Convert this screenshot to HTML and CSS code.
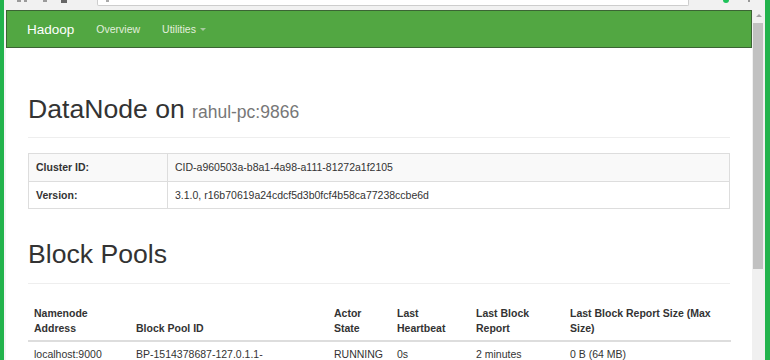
FILE: index.html
```html
<!DOCTYPE html>
<html>
<head>
<meta charset="utf-8">
<title>DataNode Information</title>
<link rel="stylesheet" href="styles.css">
</head>
<body>
<div class="frame">
  <div class="chrome">
    <div class="chrome-icons">
      <span class="ci ci-a"></span>
      <span class="ci ci-b"></span>
      <span class="ci ci-c"></span>
      <span class="ci ci-d"></span>
    </div>
    <div class="address"><span class="addr-mark"></span></div>
    <div class="chrome-right">
      <span class="ext-dot"></span>
      <span class="ext-menu"></span>
    </div>
  </div>
  <div class="viewport">
    <div class="page">
      <nav class="navbar">
        <span class="brand">Hadoop</span>
        <span class="nav-link">Overview</span>
        <span class="nav-link">Utilities <span class="caret"></span></span>
      </nav>
      <div class="container">
        <div class="page-header first">
          <h1>DataNode on <small>rahul-pc:9866</small></h1>
        </div>
        <table class="info">
          <tr class="striped"><th>Cluster ID:</th><td>CID-a960503a-b8a1-4a98-a111-81272a1f2105</td></tr>
          <tr><th>Version:</th><td>3.1.0, r16b70619a24cdcf5d3b0fcf4b58ca77238ccbe6d</td></tr>
        </table>
        <div class="page-header second">
          <h1>Block Pools</h1>
        </div>
        <table class="pools">
          <colgroup>
            <col class="c1"><col class="c2"><col class="c3"><col class="c4"><col class="c5"><col class="c6">
          </colgroup>
          <thead>
            <tr>
              <th>Namenode Address</th>
              <th>Block Pool ID</th>
              <th>Actor State</th>
              <th>Last Heartbeat</th>
              <th>Last Block Report</th>
              <th>Last Block Report Size (Max Size)</th>
            </tr>
          </thead>
          <tbody>
            <tr>
              <td>localhost:9000</td>
              <td>BP-1514378687-127.0.1.1-<wbr>1523431406012</td>
              <td>RUNNING</td>
              <td>0s</td>
              <td>2 minutes</td>
              <td>0 B (64 MB)</td>
            </tr>
          </tbody>
        </table>
      </div>
    </div>
    <div class="scrollbar">
      <span class="arrow-up"></span>
      <span class="thumb"></span>
    </div>
  </div>
</div>
</body>
</html>
```
FILE: styles.css
```css
* { box-sizing: border-box; }
html, body { margin: 0; padding: 0; }
body {
  width: 770px;
  height: 360px;
  overflow: hidden;
  background: #fff;
  font-family: "Liberation Sans", Arial, sans-serif;
  font-size: 10.5px;
  color: #333;
}
.frame {
  display: flex;
  flex-direction: column;
  width: 770px;
  height: 360px;
  border-left: 4px solid #22b34c;
  border-right: 5px solid #22b34c;
}
.chrome {
  height: 10px;
  flex: none;
  display: flex;
  background: #f1f1f1;
}
.chrome-icons {
  width: 93px;
  display: flex;
  align-items: flex-start;
}
.ci { display: block; height: 2px; background: #9a9a9a; }
.ci-a { width: 4px; margin-left: 13px; }
.ci-b { width: 3px; margin-left: 3px; }
.ci-c { width: 4px; margin-left: 16px; }
.ci-d { width: 6px; height: 3px; margin-left: 14px; background: #666; }
.address {
  width: 592px;
  height: 6px;
  background: #fff;
  border: 1px solid #cdcdcd;
  border-top: none;
  border-radius: 0 0 2px 2px;
  position: relative;
}
.addr-mark {
  position: absolute;
  left: 8px;
  top: 0;
  width: 3px;
  height: 2px;
  background: #aaa;
}
.chrome-right {
  flex: 1;
  display: flex;
  align-items: flex-start;
}
.ext-dot {
  width: 6px;
  height: 3px;
  margin-left: 34px;
  background: #1ec25a;
  border-radius: 0 0 3px 3px;
}
.ext-menu {
  width: 2px;
  height: 2px;
  margin-left: 19px;
  background: #999;
}
.viewport {
  flex: 1;
  display: flex;
  border-left: 2px solid #f4f4f4;
  min-height: 0;
}
.page {
  flex: 1;
  overflow: hidden;
  background: #fff;
}
.navbar {
  height: 38px;
  background: #52a742;
  border: 1px solid #3b6434;
  display: flex;
  align-items: center;
  padding-left: 20px;
}
.brand {
  font-size: 13.5px;
  color: #fff;
  padding: 0 11px 0 0;
}
.nav-link {
  font-size: 10.5px;
  color: #e2efde;
  padding: 0 11px;
  display: flex;
  align-items: center;
}
.caret {
  display: inline-block;
  width: 0;
  height: 0;
  margin-left: 4px;
  border-top: 3px solid #a8c9a0;
  border-left: 3px solid transparent;
  border-right: 3px solid transparent;
}
.container {
  margin: 0 22px;
}
.page-header {
  border-bottom: 1px solid #eee;
}
.page-header.first { margin-top: 46px; padding-bottom: 13px; }
.page-header.second { margin-top: 30px; padding-bottom: 14px; }
h1 {
  margin: 0;
  font-size: 26.6px;
  font-weight: normal;
  line-height: 30px;
  height: 30px;
  color: #333;
}
h1 small {
  font-size: 17.5px;
  line-height: 1;
  color: #777;
}
table {
  border-collapse: collapse;
  border-spacing: 0;
  width: 100%;
}
.info {
  margin-top: 15px;
  border: 1px solid #ddd;
}
.info th, .info td {
  border: 1px solid #ddd;
  padding: 6px 7px;
  line-height: 14.5px;
  text-align: left;
  vertical-align: top;
}
.info th { width: 139px; font-weight: bold; }
.info tr.striped { background: #f9f9f9; }
.pools {
  margin-top: 17px;
  table-layout: fixed;
}
.pools .c1 { width: 102px; }
.pools .c2 { width: 198px; }
.pools .c3 { width: 63px; }
.pools .c4 { width: 79px; }
.pools .c5 { width: 94px; }
.pools .c6 { width: 167px; }
.pools th, .pools td {
  padding: 5px 6px;
  line-height: 14.5px;
  text-align: left;
}
.pools th {
  vertical-align: bottom;
  font-weight: bold;
  border-bottom: 2px solid #ddd;
}
.pools td {
  vertical-align: top;
  border-top: 1px solid #ddd;
}
.pools tbody tr:first-child td { border-top: none; }
.scrollbar {
  width: 13px;
  flex: none;
  background: #f0f0f0;
  display: flex;
  flex-direction: column;
  align-items: center;
}
.arrow-up {
  margin-top: 4px;
  width: 0;
  height: 0;
  border-bottom: 3px solid #a3a3a3;
  border-left: 3px solid transparent;
  border-right: 3px solid transparent;
}
.thumb {
  margin-top: 6px;
  width: 10px;
  height: 246px;
  background: #c1c1c1;
  margin-left: -1px;
}
```
